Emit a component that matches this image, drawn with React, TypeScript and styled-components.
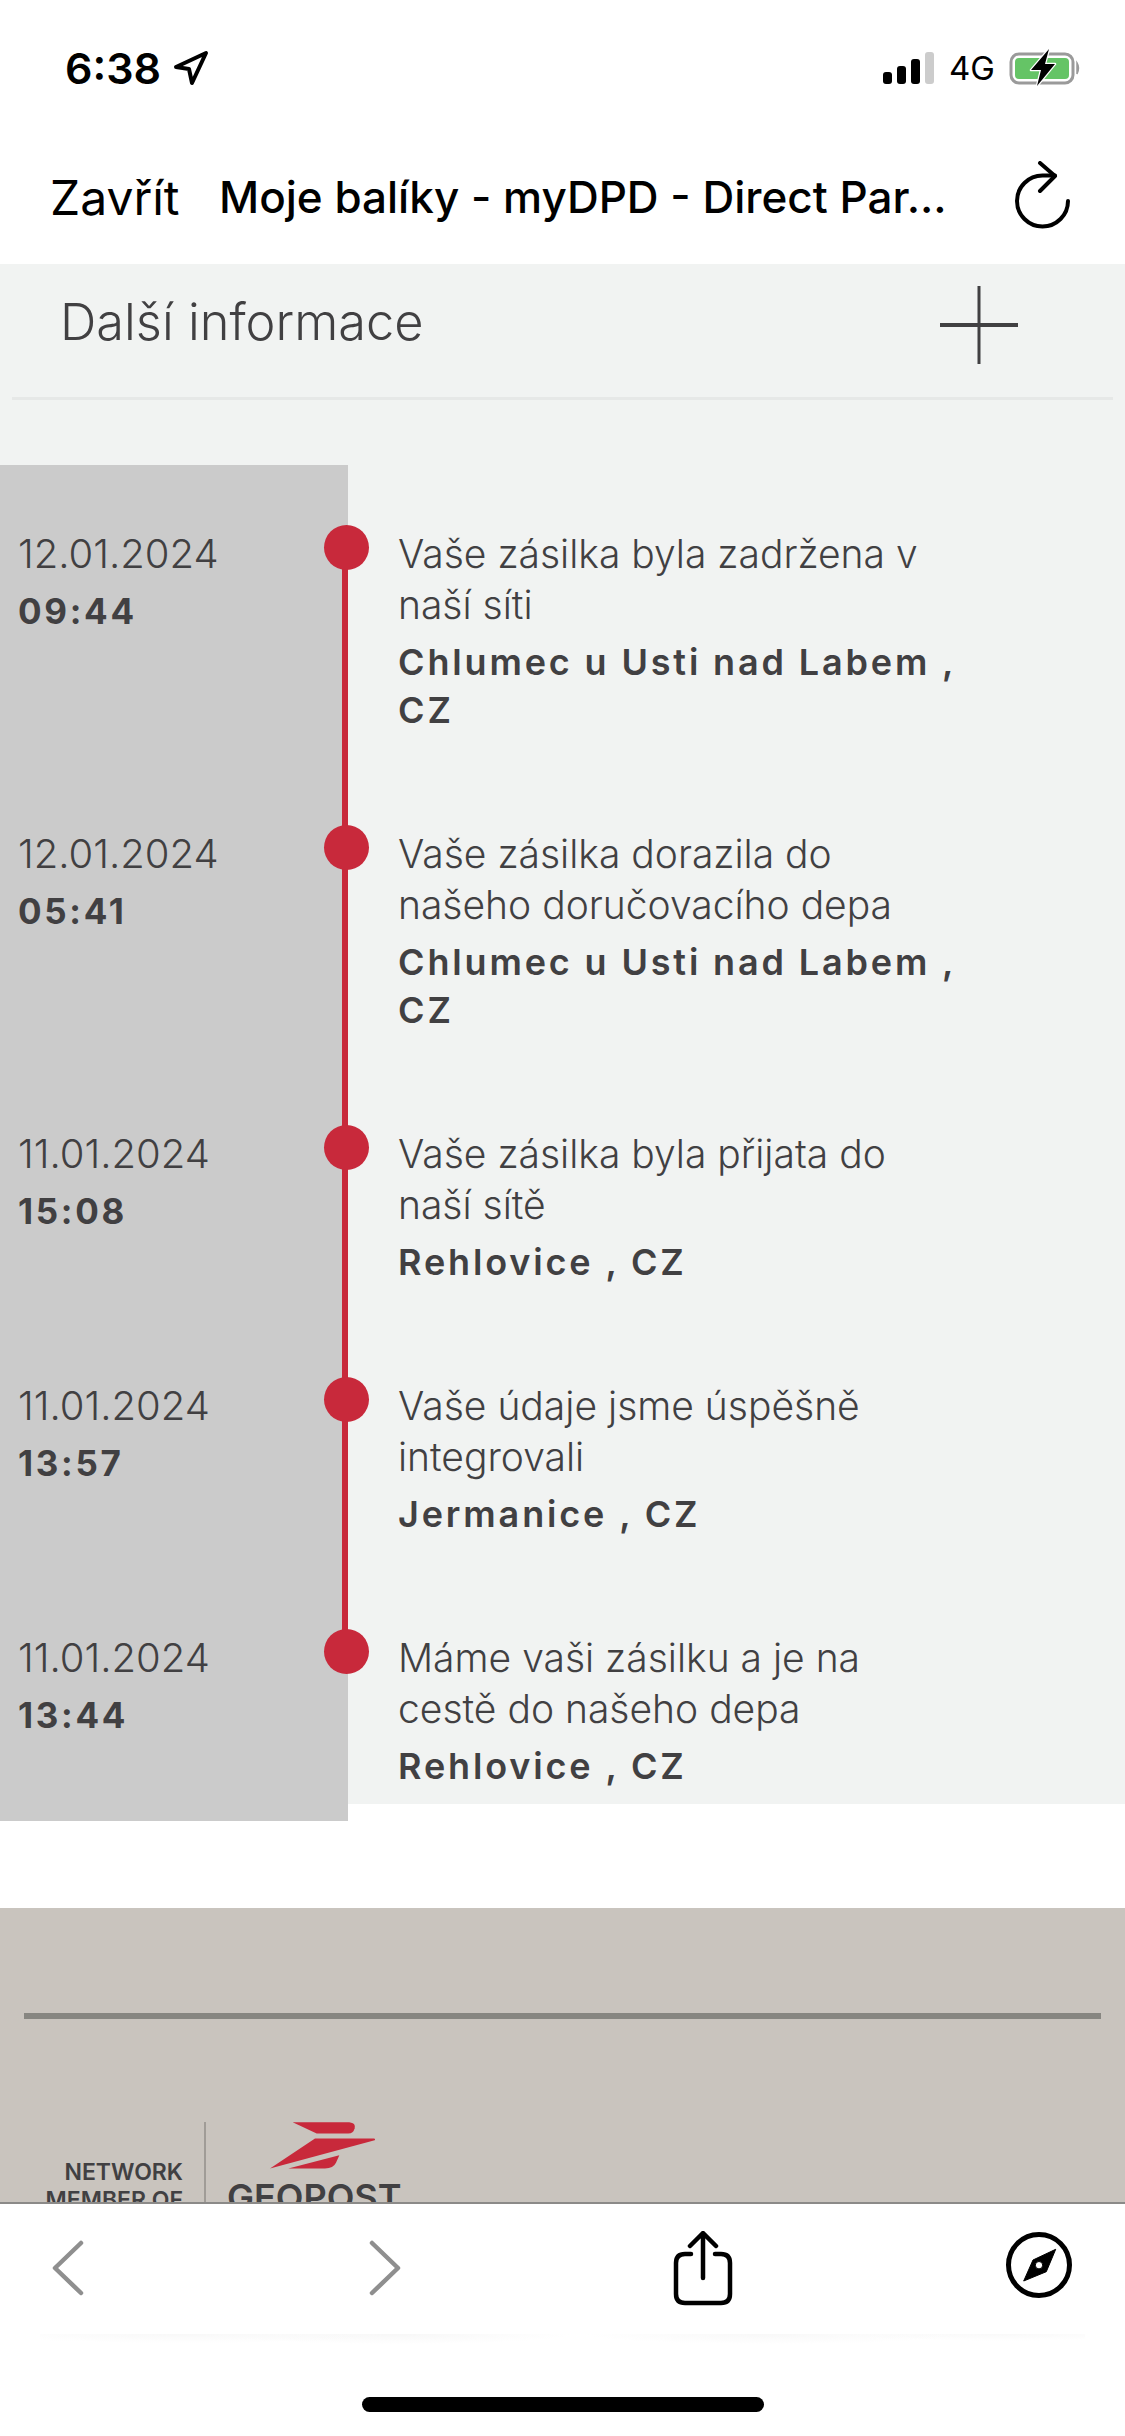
import React from "react";
import styled, { createGlobalStyle } from "styled-components";

const GlobalStyle = createGlobalStyle`
  html, body {
    margin: 0;
    padding: 0;
    background: #fff;
  }
  * {
    box-sizing: border-box;
  }
`;

const events = [
  {
    date: "12.01.2024",
    time: "09:44",
    message: "Vaše zásilka byla zadržena v naší síti",
    place: "Chlumec u Usti nad Labem , CZ",
  },
  {
    date: "12.01.2024",
    time: "05:41",
    message: "Vaše zásilka dorazila do našeho doručovacího depa",
    place: "Chlumec u Usti nad Labem , CZ",
  },
  {
    date: "11.01.2024",
    time: "15:08",
    message: "Vaše zásilka byla přijata do naší sítě",
    place: "Rehlovice , CZ",
  },
  {
    date: "11.01.2024",
    time: "13:57",
    message: "Vaše údaje jsme úspěšně integrovali",
    place: "Jermanice , CZ",
  },
  {
    date: "11.01.2024",
    time: "13:44",
    message: "Máme vaši zásilku a je na cestě do našeho depa",
    place: "Rehlovice , CZ",
  },
];

const Screen = styled.div`
  width: 1125px;
  height: 2436px;
  display: flex;
  flex-direction: column;
  overflow: hidden;
  background: #fff;
  font-family: Inter, "Liberation Sans", sans-serif;
  color: #000;
`;

const StatusBar = styled.div`
  height: 136px;
  flex: none;
  display: flex;
  justify-content: space-between;
  align-items: flex-start;
  padding: 46px 44px 0 65px;
`;

const StatusTime = styled.div`
  display: flex;
  align-items: center;
  gap: 12px;
  font-size: 43px;
  line-height: 44px;
  font-weight: 600;
`;

const StatusRight = styled.div`
  display: flex;
  align-items: center;
  gap: 14px;
  height: 44px;
`;

const NetworkLabel = styled.span`
  font-size: 33px;
  font-weight: 400;
`;

const Header = styled.header`
  height: 128px;
  flex: none;
  display: flex;
  align-items: center;
  padding: 0 54px 6px 50px;
`;

const CloseLabel = styled.span`
  font-size: 48px;
  font-weight: 400;
  width: 169px;
  flex: none;
`;

const PageTitle = styled.h1`
  margin: 0;
  flex: 1;
  font-size: 44px;
  font-weight: 500;
  white-space: nowrap;
`;

const Content = styled.main`
  flex: 1;
  min-height: 0;
  overflow: hidden;
`;

const Details = styled.section`
  display: flow-root;
  background: #f1f3f2;
  color: #414042;
`;

const DetailsHeader = styled.div`
  height: 136px;
  margin: 0 12px;
  padding: 0 95px 12px 48px;
  display: flex;
  align-items: center;
  justify-content: space-between;
  border-bottom: 3px solid #e6e8e7;
`;

const DetailsTitle = styled.h2`
  margin: 0 0 6px;
  font-size: 50.5px;
  font-weight: 300;
`;

const Timeline = styled.div`
  margin-top: 65px;
  margin-bottom: -17px;
  display: flex;
  flex-direction: column;
`;

const Row = styled.div`
  display: flex;
`;

const WhenCell = styled.div<{ $first: boolean; $last: boolean }>`
  position: relative;
  width: 348px;
  flex: none;
  padding: 63px 0 31px 18px;
  background: #cbcbcb;

  &::before {
    content: "";
    position: absolute;
    top: 60px;
    left: 324px;
    width: 45px;
    height: 45px;
    border-radius: 50%;
    background: #c8293b;
    z-index: 2;
  }

  &::after {
    content: "";
    position: absolute;
    top: ${(props) => (props.$first ? "82px" : "0")};
    bottom: ${(props) => (props.$last ? "calc(100% - 82px)" : "0")};
    right: 0;
    width: 6px;
    background: #c8293b;
  }
`;

const DateText = styled.div`
  font-size: 40px;
  line-height: 51px;
  font-weight: 300;
`;

const TimeText = styled.div`
  margin-top: 8px;
  font-size: 35px;
  line-height: 48px;
  font-weight: 700;
  letter-spacing: 2.7px;
`;

const WhatCell = styled.div`
  width: 620px;
  padding: 63px 0 31px 50px;
`;

const Message = styled.div`
  max-width: 560px;
  font-size: 39px;
  line-height: 51px;
  font-weight: 300;
`;

const Place = styled.div`
  margin-top: 8px;
  font-size: 36px;
  line-height: 48px;
  font-weight: 600;
  letter-spacing: 2.85px;
`;

const Footer = styled.footer`
  margin-top: 104px;
  height: 400px;
  padding-top: 105px;
  background: #c9c4be;
`;

const FooterRule = styled.hr`
  margin: 0 24px;
  height: 6px;
  border: none;
  background: #878681;
`;

const Brand = styled.div`
  margin-top: 103px;
  display: flex;
  color: #414042;
`;

const NetworkNote = styled.div`
  width: 204px;
  padding: 36px 21px 0 0;
  text-align: right;
  font-size: 23px;
  line-height: 28px;
  font-weight: 600;
  white-space: nowrap;
`;

const BrandDivider = styled.div`
  width: 2px;
  height: 120px;
  background: #a09c97;
`;

const BrandMark = styled.div`
  margin-left: 21px;
  display: flex;
  flex-direction: column;
  align-items: flex-start;
`;

const BrandName = styled.div`
  margin-top: 4px;
  font-size: 36px;
  line-height: 48px;
  font-weight: 600;
`;

const BrandLogo = styled.svg`
  margin-left: 43px;
`;

const Toolbar = styled.nav`
  position: relative;
  height: 234px;
  flex: none;
  background: #fff;
  border-top: 2px solid #8b8a88;
  padding: 27px 52px 0;
  display: flex;
  align-items: flex-start;
`;

const ToolSlot = styled.div<{ $width: number }>`
  width: ${(props) => props.$width}px;
  flex: none;
  display: flex;
`;

const ChevronSvg = styled.svg`
  margin-top: 9px;
`;

const Reflection = styled.div`
  position: absolute;
  left: 40px;
  right: 40px;
  top: 130px;
  height: 40px;
  background:
    radial-gradient(ellipse at 14% 0, #f8f8f8 0, transparent 16%),
    radial-gradient(ellipse at 34% 0, #f7f7f7 0, transparent 18%),
    radial-gradient(ellipse at 70% 0, #f8f8f8 0, transparent 18%),
    radial-gradient(ellipse at 92% 0, #f9f9f9 0, transparent 12%);
`;

const HomeIndicator = styled.div`
  position: absolute;
  left: 362px;
  bottom: 24px;
  width: 402px;
  height: 15px;
  border-radius: 8px;
  background: #000;
`;

const LocationArrow = () => (
  <svg width="36" height="36" viewBox="0 0 36 36" fill="none">
    <path
      d="M3 17 L33 3 L19 33 L16 19 Z"
      stroke="#000"
      strokeWidth="4"
      strokeLinejoin="round"
    />
  </svg>
);

const SignalBars = () => (
  <svg width="52" height="32" viewBox="0 0 52 32">
    <rect x="0" y="20" width="9" height="12" rx="3" fill="#000" />
    <rect x="14" y="14" width="9" height="18" rx="3" fill="#000" />
    <rect x="28" y="7" width="9" height="25" rx="3" fill="#000" />
    <rect x="42" y="0" width="9" height="32" rx="3" fill="#cccccc" />
  </svg>
);

const Battery = () => (
  <svg width="72" height="38" viewBox="0 0 72 38">
    <rect x="2" y="5" width="62" height="29" rx="8" fill="none" stroke="#9a9a9a" strokeWidth="3" />
    <rect x="6" y="9" width="54" height="21" rx="4" fill="#65c466" />
    <path d="M68 14 Q71 19 68 25 Z" fill="#9a9a9a" stroke="#9a9a9a" strokeWidth="1.5" />
    <path
      d="M40 0 L22 21 H32 L28 37 L46 15 H36 Z"
      fill="#000"
      stroke="#fff"
      strokeWidth="2.5"
      strokeLinejoin="round"
      paintOrder="stroke"
    />
  </svg>
);

const ReloadIcon = () => (
  <svg width="58" height="72" viewBox="0 0 58 72" fill="none">
    <path
      d="M55 40 A25.5 25.5 0 1 1 29.5 14.5 H42"
      stroke="#000"
      strokeWidth="4"
      strokeLinecap="round"
    />
    <path
      d="M27 2 L42 15 L27 30"
      stroke="#000"
      strokeWidth="4"
      strokeLinecap="round"
      strokeLinejoin="round"
    />
  </svg>
);

const PlusIcon = () => (
  <svg width="78" height="78" viewBox="0 0 78 78">
    <rect x="0" y="37" width="78" height="4" fill="#414042" />
    <rect x="37.5" y="0" width="3" height="78" fill="#414042" />
  </svg>
);

const Chevron = ({ flip }: { flip?: boolean }) => (
  <ChevronSvg width="32" height="56" viewBox="0 0 32 56" fill="none">
    <path
      d={flip ? "M3 3 L29 28 L3 53" : "M29 3 L3 28 L29 53"}
      stroke="#8f8f8f"
      strokeWidth="4.5"
      strokeLinecap="round"
      strokeLinejoin="round"
    />
  </ChevronSvg>
);

const ShareIcon = () => (
  <svg width="60" height="76" viewBox="0 0 60 76" fill="none">
    <path
      d="M18 23 H12 Q3 23 3 32 V63 Q3 72 12 72 H48 Q57 72 57 63 V32 Q57 23 48 23 H42"
      stroke="#000"
      strokeWidth="4.5"
      strokeLinecap="round"
    />
    <path
      d="M30 47 V3 M17 15 L30 2 L43 15"
      stroke="#000"
      strokeWidth="4.5"
      strokeLinecap="round"
      strokeLinejoin="round"
    />
  </svg>
);

const CompassIcon = () => (
  <svg width="68" height="68" viewBox="0 0 68 68" fill="none">
    <circle cx="34" cy="34" r="30.5" stroke="#000" strokeWidth="5" />
    <path
      fillRule="evenodd"
      d="M50.7 18.3 L41.3 40.7 L18.7 50 L28 29 Z M34 30.5 A3.7 3.7 0 1 0 34.01 37.9 A3.7 3.7 0 1 0 34 30.5 Z"
      fill="#000"
      stroke="#000"
      strokeWidth="1"
      strokeLinejoin="round"
    />
  </svg>
);

const GeopostLogo = () => (
  <BrandLogo width="105" height="47" viewBox="810 126 315 140">
    <path d="M878 126 H1048 Q1068 128 1064 144 Q1060 160 1045 160 H950 Z" fill="#c8293b" />
    <path d="M945 175 H1122 Q1127 177 1124 180 L810 265 Z" fill="#c8293b" />
    <path d="M865 265 L1018 225 L1008 248 Q1000 265 975 265 Z" fill="#c8293b" />
  </BrandLogo>
);

const App = () => {
  return (
    <Screen>
      <GlobalStyle />
      <StatusBar>
        <StatusTime>
          6:38
          <LocationArrow />
        </StatusTime>
        <StatusRight>
          <SignalBars />
          <NetworkLabel>4G</NetworkLabel>
          <Battery />
        </StatusRight>
      </StatusBar>
      <Header>
        <CloseLabel>Zavřít</CloseLabel>
        <PageTitle>Moje balíky - myDPD - Direct Par...</PageTitle>
        <ReloadIcon />
      </Header>
      <Content>
        <Details>
          <DetailsHeader>
            <DetailsTitle>Další informace</DetailsTitle>
            <PlusIcon />
          </DetailsHeader>
          <Timeline>
            {events.map((item, index) => (
              <Row key={index}>
                <WhenCell $first={index === 0} $last={index === events.length - 1}>
                  <DateText>{item.date}</DateText>
                  <TimeText>{item.time}</TimeText>
                </WhenCell>
                <WhatCell>
                  <Message>{item.message}</Message>
                  <Place>{item.place}</Place>
                </WhatCell>
              </Row>
            ))}
          </Timeline>
        </Details>
        <Footer>
          <FooterRule />
          <Brand>
            <NetworkNote>
              NETWORK
              <br />
              MEMBER OF
            </NetworkNote>
            <BrandDivider />
            <BrandMark>
              <GeopostLogo />
              <BrandName>GEOPOST</BrandName>
            </BrandMark>
          </Brand>
        </Footer>
      </Content>
      <Toolbar>
        <ToolSlot $width={317}>
          <Chevron />
        </ToolSlot>
        <ToolSlot $width={304}>
          <Chevron flip />
        </ToolSlot>
        <ToolSlot $width={332}>
          <ShareIcon />
        </ToolSlot>
        <ToolSlot $width={68}>
          <CompassIcon />
        </ToolSlot>
        <Reflection />
        <HomeIndicator />
      </Toolbar>
    </Screen>
  );
};

export default App;
